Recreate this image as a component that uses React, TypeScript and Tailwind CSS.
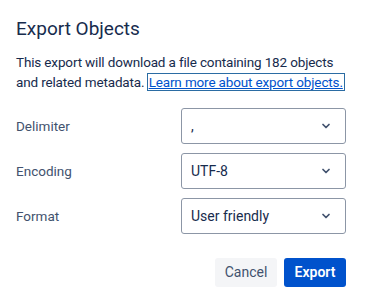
import { ChevronDown } from "lucide-react";

const fields = [
  { label: "Delimiter", value: "," },
  { label: "Encoding", value: "UTF-8" },
  { label: "Format", value: "User friendly" },
];

function SelectBox({ value }: { value: string }) {
  return (
    <div className="flex h-[36px] w-[165px] items-center justify-between rounded-[3px] border border-[#8c96a6] bg-white pl-[9px] pr-[13px] text-[14px] text-[#172b4d]">
      <span>{value}</span>
      <ChevronDown className="h-[12px] w-[12px] text-[#42526e]" strokeWidth={3.5} />
    </div>
  );
}

export default function App() {
  return (
    <div className="w-[365px] h-[298px] bg-white pl-4 pr-[19px] pt-[17px] font-['Roboto',sans-serif] text-[#172b4d]">
      <h1 className="text-[19px] leading-[24px] font-normal">Export Objects</h1>

      <p className="mt-[11px] -mr-[9px] text-[13.5px] leading-[20px] tracking-[-0.15px] text-[#172b4d]">
        This export will download a file containing 182 objects and related
        metadata.{" "}
        <a
          href="#"
          className="whitespace-nowrap px-[1px] text-[#0052cc] underline outline outline-1 outline-[#2b6ca3]"
        >
          Learn more about export objects.
        </a>
      </p>

      <div className="mt-[16px] flex flex-col gap-[9px]">
        {fields.map((f) => (
          <div key={f.label} className="flex items-center justify-between">
            <span className="text-[13.5px] text-[#42526e]">{f.label}</span>
            <SelectBox value={f.value} />
          </div>
        ))}
      </div>

      <div className="mt-[24px] flex justify-end gap-[7px]">
        <button className="h-[29px] w-[62px] rounded-[3px] bg-[#f4f5f7] text-[14px] text-[#42526e]">
          Cancel
        </button>
        <button className="h-[29px] w-[62px] rounded-[3px] bg-[#0052cc] text-[14px] font-semibold text-white">
          Export
        </button>
      </div>
    </div>
  );
}
